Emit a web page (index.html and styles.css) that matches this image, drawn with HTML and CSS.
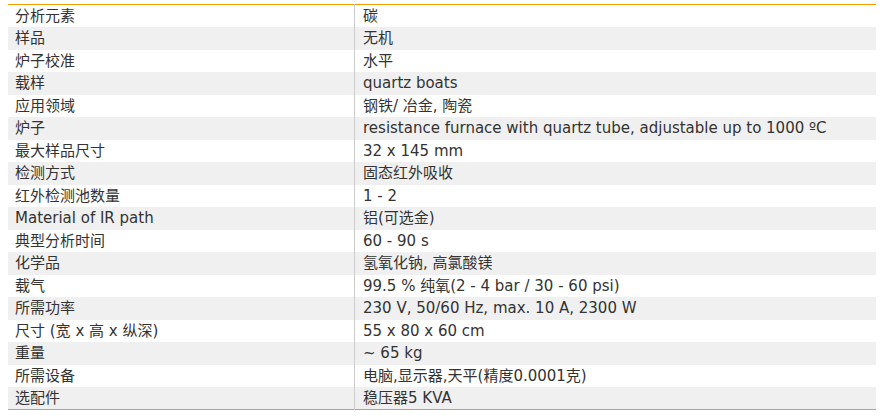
FILE: index.html
```html
<!DOCTYPE html>
<html lang="zh">
<head>
<meta charset="utf-8">
<link rel="stylesheet" href="styles.css">
</head>
<body>
<table class="spec">
<tbody>
<tr><td class="k">分析元素</td><td class="v">碳</td></tr>
<tr><td class="k">样品</td><td class="v">无机</td></tr>
<tr><td class="k">炉子校准</td><td class="v">水平</td></tr>
<tr><td class="k">载样</td><td class="v">quartz boats</td></tr>
<tr><td class="k">应用领域</td><td class="v">钢铁/ 冶金, 陶瓷</td></tr>
<tr><td class="k">炉子</td><td class="v">resistance furnace with quartz tube, adjustable up to 1000 ºC</td></tr>
<tr><td class="k">最大样品尺寸</td><td class="v">32 x 145 mm</td></tr>
<tr><td class="k">检测方式</td><td class="v">固态红外吸收</td></tr>
<tr><td class="k">红外检测池数量</td><td class="v">1 - 2</td></tr>
<tr><td class="k">Material of IR path</td><td class="v">铝(可选金)</td></tr>
<tr><td class="k">典型分析时间</td><td class="v">60 - 90 s</td></tr>
<tr><td class="k">化学品</td><td class="v">氢氧化钠, 高氯酸镁</td></tr>
<tr><td class="k">载气</td><td class="v">99.5 % 纯氧(2 - 4 bar / 30 - 60 psi)</td></tr>
<tr><td class="k">所需功率</td><td class="v">230 V, 50/60 Hz, max. 10 A, 2300 W</td></tr>
<tr><td class="k">尺寸 (宽 x 高 x 纵深)</td><td class="v">55 x 80 x 60 cm</td></tr>
<tr><td class="k">重量</td><td class="v">~ 65 kg</td></tr>
<tr><td class="k">所需设备</td><td class="v">电脑,显示器,天平(精度0.0001克)</td></tr>
<tr><td class="k">选配件</td><td class="v">稳压器5 KVA</td></tr>
</tbody>
</table>
</body>
</html>
```
FILE: styles.css
```css
html, body {
  margin: 0;
  padding: 0;
  background: #ffffff;
}
body {
  padding: 4px 10px 0 8px;
}
.spec {
  width: 868px;
  border-collapse: collapse;
  border-top: 1px solid #f39c00;
  border-bottom: 1px solid #f39c00;
  font-family: "DejaVu Sans", Verdana, "Microsoft YaHei", "Noto Sans CJK SC", sans-serif;
  font-size: 15px;
  color: #333333;
}
.spec tr {
  height: 22.5px;
}
.spec tr:nth-child(even) {
  background: #f0f0f0;
}
.spec td {
  padding: 0 7px;
  line-height: 18px;
  vertical-align: middle;
  white-space: nowrap;
}
.spec td.k {
  width: 332px;
  border-right: 1px solid #cccccc;
}
.spec td.v {
  padding-left: 8px;
}
```
